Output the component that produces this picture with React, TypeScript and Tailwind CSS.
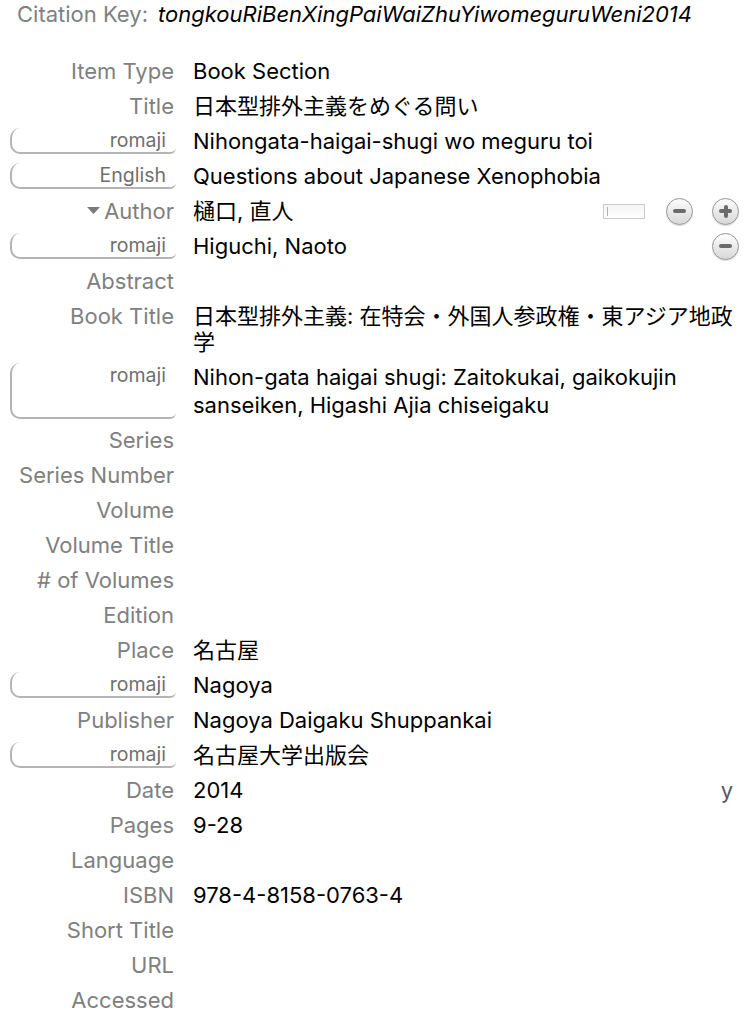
import React from 'react';

type Field = {
  label: string;
  value?: string;
  variant?: boolean;
  tall?: boolean;
  extra?: 'author' | 'remove' | 'date';
};

const fields: Field[] = [
  { label: 'Item Type', value: 'Book Section' },
  { label: 'Title', value: '日本型排外主義をめぐる問い' },
  { label: 'romaji', value: 'Nihongata-haigai-shugi wo meguru toi', variant: true },
  { label: 'English', value: 'Questions about Japanese Xenophobia', variant: true },
  { label: 'Author', value: '樋口, 直人', extra: 'author' },
  { label: 'romaji', value: 'Higuchi, Naoto', variant: true, extra: 'remove' },
  { label: 'Abstract' },
  { label: 'Book Title', value: '日本型排外主義: 在特会・外国人参政権・東アジア地政学' },
  {
    label: 'romaji',
    value: 'Nihon-gata haigai shugi: Zaitokukai, gaikokujin sanseiken, Higashi Ajia chiseigaku',
    variant: true,
    tall: true,
  },
  { label: 'Series' },
  { label: 'Series Number' },
  { label: 'Volume' },
  { label: 'Volume Title' },
  { label: '# of Volumes' },
  { label: 'Edition' },
  { label: 'Place', value: '名古屋' },
  { label: 'romaji', value: 'Nagoya', variant: true },
  { label: 'Publisher', value: 'Nagoya Daigaku Shuppankai' },
  { label: 'romaji', value: '名古屋大学出版会', variant: true },
  { label: 'Date', value: '2014', extra: 'date' },
  { label: 'Pages', value: '9-28' },
  { label: 'Language' },
  { label: 'ISBN', value: '978-4-8158-0763-4' },
  { label: 'Short Title' },
  { label: 'URL' },
  { label: 'Accessed' },
];

const CircleButton = ({ plus }: { plus?: boolean }) => (
  <div className="relative flex h-[27px] w-[27px] items-center justify-center rounded-full border border-[#959595] bg-gradient-to-b from-[#fdfdfd] to-[#d8d8d8] shadow-[0_1px_1px_rgba(0,0,0,0.15)]">
    <div className="h-[4px] w-[13px] rounded-full bg-[#6a6a6a]" />
    {plus && <div className="absolute h-[13px] w-[4px] rounded-full bg-[#6a6a6a]" />}
  </div>
);

const Row = ({ field }: { field: Field }) => {
  return (
    <div className={field.tall ? 'flex items-stretch pt-[4px] pb-[3px]' : 'flex items-stretch pt-[5px] pb-[4px]'}>
      <div className="w-[174px] shrink-0">
        {field.variant ? (
          <div className="ml-[10px] mr-[-2px] h-full rounded-l-[10px] rounded-br-[6px] border-b-2 border-l-2 border-[#b4b4b4] pt-[1px] pr-[10px] text-right text-[19.5px] leading-[23px] text-[#6f6f6f]">
            {field.label}
          </div>
        ) : (
          <div className="flex items-center justify-end text-right leading-[26px] text-[#808080]">
            {field.extra === 'author' && (
              <svg width="13" height="8" viewBox="0 0 13 8" className="mr-[4px]">
                <path d="M0 0 L13 0 L6.5 7 Z" fill="#7a7a7a" />
              </svg>
            )}
            {field.label}
          </div>
        )}
      </div>
      <div className="flex min-w-0 flex-1 items-start pl-[19px] pr-[7px]">
        <div className={field.tall ? 'min-w-0 flex-1 leading-[28px] text-black' : 'min-w-0 flex-1 leading-[26px] text-black'}>
          {field.value}
        </div>
        {field.extra === 'author' && (
          <div className="flex h-[26px] items-center">
            <div className="flex h-[15px] w-[42px] items-center border border-[#cbcbcb] bg-gradient-to-b from-[#f4f4f4] to-white pl-[3px]">
              <div className="h-[9px] w-[1px] bg-[#b0b0b0]" />
            </div>
            <div className="ml-[21px]">
              <CircleButton />
            </div>
            <div className="ml-[19px]">
              <CircleButton plus />
            </div>
          </div>
        )}
        {field.extra === 'remove' && (
          <div className="flex h-[26px] items-center">
            <CircleButton />
          </div>
        )}
        {field.extra === 'date' && (
          <div className="mr-[6px] leading-[26px] text-[#55596a]">y</div>
        )}
      </div>
    </div>
  );
};

const App = () => {
  return (
    <div
      className="h-[1018px] w-[746px] overflow-hidden bg-white text-[22px]"
      style={{ fontFamily: 'Inter, "Noto Sans CJK JP", sans-serif' }}
    >
      <div className="flex pt-[1px] pl-[17px] leading-[26px]">
        <span className="text-[#808080]">Citation Key:</span>
        <span className="ml-[10px] italic text-black">
          tongkouRiBenXingPaiWaiZhuYiwomeguruWeni2014
        </span>
      </div>
      <div className="mt-[26px] flex flex-col">
        {fields.map((f, i) => (
          <Row key={i} field={f} />
        ))}
      </div>
    </div>
  );
};

export default App;
